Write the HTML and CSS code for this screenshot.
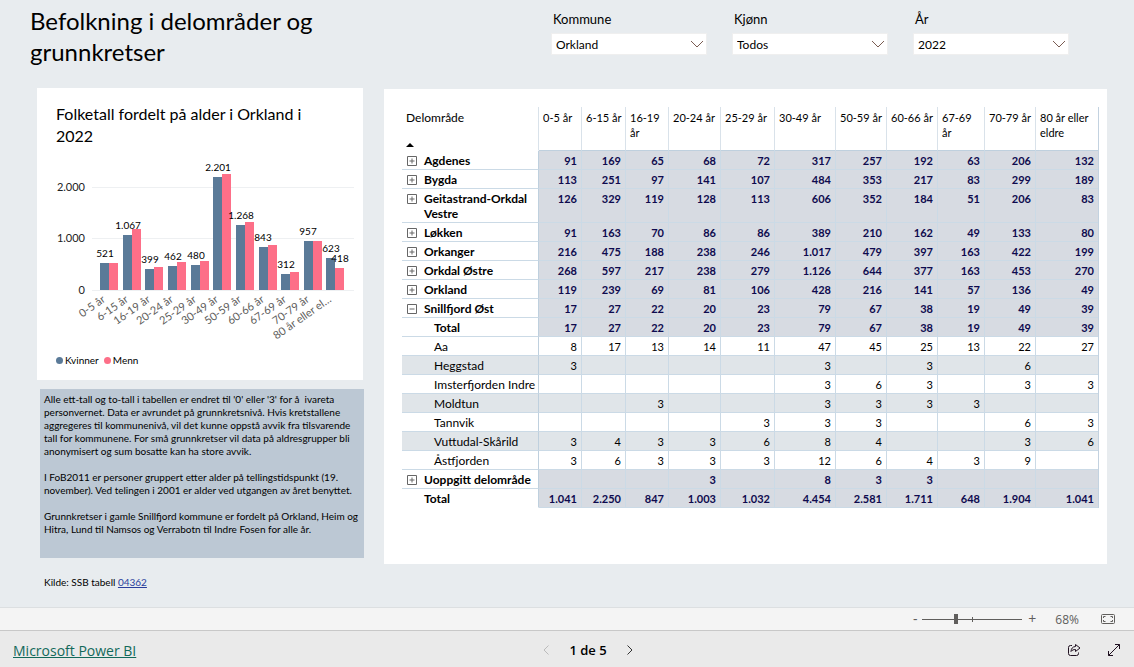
FILE: index.html
```
<!DOCTYPE html>
<html lang="nb">
<head>
<meta charset="utf-8">
<meta name="viewport" content="width=device-width, initial-scale=1">
<title>Befolkning i delområder og grunnkretser</title>
<link rel="stylesheet" href="styles.css">
</head>
<body>
<main class="report">
  <header class="report-head">
    <h1 class="title">Befolkning i delområder og grunnkretser</h1>
    <form class="slicers">
      <div class="slicer">
        <label for="kommune">Kommune</label>
        <div class="select-box">
          <select id="kommune"><option>Orkland</option></select>
          <svg class="chevron" viewBox="0 0 14 8"><path d="M1 1l6 6 6-6"/></svg>
        </div>
      </div>
      <div class="slicer">
        <label for="kjonn">Kjønn</label>
        <div class="select-box">
          <select id="kjonn"><option>Todos</option></select>
          <svg class="chevron" viewBox="0 0 14 8"><path d="M1 1l6 6 6-6"/></svg>
        </div>
      </div>
      <div class="slicer">
        <label for="ar">År</label>
        <div class="select-box">
          <select id="ar"><option>2022</option></select>
          <svg class="chevron" viewBox="0 0 14 8"><path d="M1 1l6 6 6-6"/></svg>
        </div>
      </div>
    </form>
  </header>

  <div class="panels">
    <div class="side">
      <section class="card chart-card">
        <h2 class="chart-title">Folketall fordelt på alder i Orkland i 2022</h2>
        <svg class="chart" viewBox="0 0 326 194" role="img" aria-label="Folketall fordelt på alder">
          <g class="grid">
            <path d="M55 37.5H317M55 88.500H317M55 140.500H317"/>
          </g>
          <g class="axis-y">
            <text x="48" y="41">2.000</text>
            <text x="48" y="92">1.000</text>
            <text x="48" y="144">0</text>
          </g>
          <g class="kvinner">
            <rect x="63" y="113" width="9" height="27"/>
            <rect x="86" y="85" width="9" height="55"/>
            <rect x="108" y="119" width="9" height="21"/>
            <rect x="131" y="116" width="9" height="24"/>
            <rect x="154" y="115" width="9" height="25"/>
            <rect x="176" y="27" width="9" height="113"/>
            <rect x="199" y="75" width="9" height="65"/>
            <rect x="222" y="97" width="9" height="43"/>
            <rect x="244" y="124" width="9" height="16"/>
            <rect x="267" y="91" width="9" height="49"/>
            <rect x="289" y="108" width="9" height="32"/>
          </g>
          <g class="menn">
            <rect x="72" y="113" width="9" height="27"/>
            <rect x="95" y="79" width="9" height="61"/>
            <rect x="117" y="117" width="9" height="23"/>
            <rect x="140" y="112" width="9" height="28"/>
            <rect x="163" y="111" width="9" height="29"/>
            <rect x="185" y="24" width="9" height="116"/>
            <rect x="208" y="72" width="9" height="68"/>
            <rect x="231" y="95" width="9" height="45"/>
            <rect x="253" y="122" width="9" height="18"/>
            <rect x="276" y="91" width="9" height="49"/>
            <rect x="298" y="118" width="9" height="22"/>
          </g>
          <g class="values">
            <text x="68" y="107">521</text>
            <text x="91" y="79">1.067</text>
            <text x="113" y="113">399</text>
            <text x="136" y="110">462</text>
            <text x="159" y="109">480</text>
            <text x="181" y="21">2.201</text>
            <text x="204" y="69">1.268</text>
            <text x="226" y="91">843</text>
            <text x="249" y="118">312</text>
            <text x="271" y="85">957</text>
            <text x="294" y="102">623</text>
            <text x="303" y="112">418</text>
          </g>
          <g class="axis-x">
            <text transform="translate(69 151) rotate(-35)">0-5 år</text>
            <text transform="translate(92 151) rotate(-35)">6-15 år</text>
            <text transform="translate(114 151) rotate(-35)">16-19 år</text>
            <text transform="translate(137 151) rotate(-35)">20-24 år</text>
            <text transform="translate(160 151) rotate(-35)">25-29 år</text>
            <text transform="translate(182 151) rotate(-35)">30-49 år</text>
            <text transform="translate(205 151) rotate(-35)">50-59 år</text>
            <text transform="translate(228 151) rotate(-35)">60-66 år</text>
            <text transform="translate(250 151) rotate(-35)">67-69 år</text>
            <text transform="translate(273 151) rotate(-35)">70-79 år</text>
            <text transform="translate(295 151) rotate(-35)">80 år eller el…</text>
          </g>
        </svg>
        <ul class="legend">
          <li><span class="dot dot-kvinner"></span>Kvinner</li>
          <li><span class="dot dot-menn"></span>Menn</li>
        </ul>
      </section>
      <section class="notes">
        <p>Alle ett-tall og to-tall i tabellen er endret til '0' eller '3' for å&nbsp; ivareta personvernet. Data er avrundet på grunnkretsnivå. Hvis kretstallene aggregeres til kommunenivå, vil det kunne oppstå avvik fra tilsvarende tall for kommunene. For små grunnkretser vil data på aldresgrupper bli anonymisert og sum bosatte kan ha store avvik.</p>
        <p>I FoB2011 er personer gruppert etter alder på tellingstidspunkt (19. november). Ved telingen i 2001 er alder ved utgangen av året benyttet.</p>
        <p>Grunnkretser i gamle Snillfjord kommune er fordelt på Orkland, Heim og Hitra, Lund til Namsos og Verrabotn til Indre Fosen for alle år.</p>
      </section>
      <p class="source">Kilde: SSB tabell <a href="#04362">04362</a></p>
    </div>

    <section class="card table-card">
      <table class="matrix">
        <colgroup>
          <col class="c-name"><col class="c-43"><col class="c-44"><col class="c-43"><col class="c-52"><col class="c-54"><col class="c-61"><col class="c-51"><col class="c-51"><col class="c-47"><col class="c-51"><col class="c-62">
        </colgroup>
        <thead>
          <tr><th scope="col" class="sorted"><div class="sort-head">Delområde<svg class="sort" viewBox="0 0 8 4"><path d="M0 4l4-4 4 4z"/></svg></div></th><th scope="col">0-5 år</th><th scope="col">6-15 år</th><th scope="col">16-19 år</th><th scope="col">20-24 år</th><th scope="col">25-29 år</th><th scope="col">30-49 år</th><th scope="col">50-59 år</th><th scope="col">60-66 år</th><th scope="col">67-69 år</th><th scope="col">70-79 år</th><th scope="col">80 år eller eldre</th></tr>
        </thead>
        <tbody>
          <tr class="group"><th scope="row"><div class="name"><button class="toggle" aria-label="Utvid Agdenes"><svg viewBox="0 0 10 10"><path d="M.5.5h9v9h-9zM2.500 5h5M5 2.500v5"/></svg></button>Agdenes</div></th><td>91</td><td>169</td><td>65</td><td>68</td><td>72</td><td>317</td><td>257</td><td>192</td><td>63</td><td>206</td><td>132</td></tr>
          <tr class="group"><th scope="row"><div class="name"><button class="toggle" aria-label="Utvid Bygda"><svg viewBox="0 0 10 10"><path d="M.5.5h9v9h-9zM2.500 5h5M5 2.500v5"/></svg></button>Bygda</div></th><td>113</td><td>251</td><td>97</td><td>141</td><td>107</td><td>484</td><td>353</td><td>217</td><td>83</td><td>299</td><td>189</td></tr>
          <tr class="group"><th scope="row"><div class="name"><button class="toggle" aria-label="Utvid Geitastrand-Orkdal Vestre"><svg viewBox="0 0 10 10"><path d="M.5.5h9v9h-9zM2.500 5h5M5 2.500v5"/></svg></button>Geitastrand-Orkdal<br>Vestre</div></th><td>126</td><td>329</td><td>119</td><td>128</td><td>113</td><td>606</td><td>352</td><td>184</td><td>51</td><td>206</td><td>83</td></tr>
          <tr class="group"><th scope="row"><div class="name"><button class="toggle" aria-label="Utvid Løkken"><svg viewBox="0 0 10 10"><path d="M.5.5h9v9h-9zM2.500 5h5M5 2.500v5"/></svg></button>Løkken</div></th><td>91</td><td>163</td><td>70</td><td>86</td><td>86</td><td>389</td><td>210</td><td>162</td><td>49</td><td>133</td><td>80</td></tr>
          <tr class="group"><th scope="row"><div class="name"><button class="toggle" aria-label="Utvid Orkanger"><svg viewBox="0 0 10 10"><path d="M.5.5h9v9h-9zM2.500 5h5M5 2.500v5"/></svg></button>Orkanger</div></th><td>216</td><td>475</td><td>188</td><td>238</td><td>246</td><td>1.017</td><td>479</td><td>397</td><td>163</td><td>422</td><td>199</td></tr>
          <tr class="group"><th scope="row"><div class="name"><button class="toggle" aria-label="Utvid Orkdal Østre"><svg viewBox="0 0 10 10"><path d="M.5.5h9v9h-9zM2.500 5h5M5 2.500v5"/></svg></button>Orkdal Østre</div></th><td>268</td><td>597</td><td>217</td><td>238</td><td>279</td><td>1.126</td><td>644</td><td>377</td><td>163</td><td>453</td><td>270</td></tr>
          <tr class="group"><th scope="row"><div class="name"><button class="toggle" aria-label="Utvid Orkland"><svg viewBox="0 0 10 10"><path d="M.5.5h9v9h-9zM2.500 5h5M5 2.500v5"/></svg></button>Orkland</div></th><td>119</td><td>239</td><td>69</td><td>81</td><td>106</td><td>428</td><td>216</td><td>141</td><td>57</td><td>136</td><td>49</td></tr>
          <tr class="group"><th scope="row"><div class="name"><button class="toggle" aria-label="Skjul Snillfjord Øst"><svg viewBox="0 0 10 10"><path d="M.5.5h9v9h-9zM2.500 5h5"/></svg></button>Snillfjord Øst</div></th><td>17</td><td>27</td><td>22</td><td>20</td><td>23</td><td>79</td><td>67</td><td>38</td><td>19</td><td>49</td><td>39</td></tr>
          <tr class="group child"><th scope="row">Total</th><td>17</td><td>27</td><td>22</td><td>20</td><td>23</td><td>79</td><td>67</td><td>38</td><td>19</td><td>49</td><td>39</td></tr>
          <tr class="child"><th scope="row">Aa</th><td>8</td><td>17</td><td>13</td><td>14</td><td>11</td><td>47</td><td>45</td><td>25</td><td>13</td><td>22</td><td>27</td></tr>
          <tr class="child band"><th scope="row">Heggstad</th><td>3</td><td></td><td></td><td></td><td></td><td>3</td><td></td><td>3</td><td></td><td>6</td><td></td></tr>
          <tr class="child"><th scope="row">Imsterfjorden Indre</th><td></td><td></td><td></td><td></td><td></td><td>3</td><td>6</td><td>3</td><td></td><td>3</td><td>3</td></tr>
          <tr class="child band"><th scope="row">Moldtun</th><td></td><td></td><td>3</td><td></td><td></td><td>3</td><td>3</td><td>3</td><td>3</td><td></td><td></td></tr>
          <tr class="child"><th scope="row">Tannvik</th><td></td><td></td><td></td><td></td><td>3</td><td>3</td><td>3</td><td></td><td></td><td>6</td><td>3</td></tr>
          <tr class="child band"><th scope="row">Vuttudal-Skårild</th><td>3</td><td>4</td><td>3</td><td>3</td><td>6</td><td>8</td><td>4</td><td></td><td></td><td>3</td><td>6</td></tr>
          <tr class="child"><th scope="row">Åstfjorden</th><td>3</td><td>6</td><td>3</td><td>3</td><td>3</td><td>12</td><td>6</td><td>4</td><td>3</td><td>9</td><td></td></tr>
          <tr class="group"><th scope="row"><div class="name"><button class="toggle" aria-label="Utvid Uoppgitt delområde"><svg viewBox="0 0 10 10"><path d="M.5.5h9v9h-9zM2.500 5h5M5 2.500v5"/></svg></button>Uoppgitt delområde</div></th><td></td><td></td><td></td><td>3</td><td></td><td>8</td><td>3</td><td>3</td><td></td><td></td><td></td></tr>
          <tr class="group grand"><th scope="row"><div class="name">Total</div></th><td>1.041</td><td>2.250</td><td>847</td><td>1.003</td><td>1.032</td><td>4.454</td><td>2.581</td><td>1.711</td><td>648</td><td>1.904</td><td>1.041</td></tr>
        </tbody>
      </table>
    </section>
  </div>
</main>

<div class="zoom-bar">
  <button class="zoom-btn" aria-label="Zoom ut">-</button>
  <div class="zoom-slider"><input type="range" min="0" max="100" value="33" aria-label="Zoom"></div>
  <button class="zoom-btn" aria-label="Zoom inn">+</button>
  <span class="zoom-value">68%</span>
  <button class="icon-btn" aria-label="Tilpass til siden">
    <svg class="fit" viewBox="0 0 14 10"><rect x=".5" y=".5" width="13" height="9" rx="1"/><path d="M4.500 2.500h-2v1.500M2.500 6v1.500h2M9.500 2.500h2v1.500M11.500 6v1.500h-2"/></svg>
  </button>
</div>

<footer class="foot">
  <a class="brand" href="#powerbi">Microsoft Power BI</a>
  <nav class="pager">
    <button class="icon-btn" aria-label="Forrige side" disabled><svg class="arrow" viewBox="0 0 6 10"><path d="M5.500.5L1 5l4.500 4.500"/></svg></button>
    <span>1 de 5</span>
    <button class="icon-btn" aria-label="Neste side"><svg class="arrow" viewBox="0 0 6 10"><path d="M.5.5L5 5 .5 9.500"/></svg></button>
  </nav>
  <div class="actions">
    <button class="icon-btn" aria-label="Del"><svg class="act" viewBox="0 0 14 14"><path d="M5 2.500H3.500a2 2 0 0 0-2 2v6a2 2 0 0 0 2 2h6a2 2 0 0 0 2-2V9.500"/><path d="M8.500 1.500v2C5.500 3.700 4.200 5.600 4 8.500 5.200 7 6.500 6.500 8.500 6.500v2L13 5z"/></svg></button>
    <button class="icon-btn" aria-label="Fullskjerm"><svg class="act" viewBox="0 0 14 14"><path d="M1.500 12.500l11-11M8 1.500h4.500V6M1.500 8v4.500H6"/></svg></button>
  </div>
</footer>
</body>
</html>
```
FILE: styles.css
```
* { box-sizing: border-box; }

body {
  margin: 0;
  min-height: 100vh;
  display: flex;
  flex-direction: column;
  background: #e8ecef;
  color: #000;
  font-family: Lato, "Open Sans", sans-serif;
  font-size: 12px;
}

h1, h2, p, ul { margin: 0; padding: 0; font-weight: 400; }
button { padding: 0; border: 0; background: none; font: inherit; color: inherit; }
svg { display: block; fill: none; }

.report { flex: 1; padding: 5px 27px 0 37px; }

.report-head {
  display: flex;
  justify-content: space-between;
  height: 83px;
  padding-right: 38px;
}
.title {
  width: 330px;
  margin-left: -7px;
  font-size: 24px;
  line-height: 31px;
}
.slicers { display: flex; gap: 25px; padding-top: 6px; }
.slicer { width: 156px; }
.slicer label { display: block; padding-left: 2px; font-size: 13px; line-height: 16px; }
.select-box { display: grid; align-items: center; margin-top: 6px; }
.select-box > * { grid-area: 1 / 1; }
.select-box select {
  width: 100%;
  height: 22px;
  padding: 0 4px;
  appearance: none;
  border: 1px solid #efefef;
  border-radius: 0;
  background: #fff;
  color: #000;
  font: 12px Lato, sans-serif;
}
.chevron { justify-self: end; width: 14px; height: 8px; margin-right: 3px; stroke: #7a5c52; pointer-events: none; }

.panels {
  display: grid;
  grid-template-columns: 326fr 723fr;
  gap: 21px;
}
.card { background: #fff; }

.chart-card { height: 292px; padding-top: 15px; }
.chart-title { padding: 0 36px 0 19px; font-size: 16px; line-height: 22px; }
.chart { width: 100%; margin-top: 3px; font-family: Lato, sans-serif; }
.grid { stroke: #eef0f2; }
.axis-y { fill: #222; font-size: 11px; text-anchor: end; }
.axis-x { fill: #605e5c; font-size: 11px; text-anchor: end; }
.values { fill: #000; font-size: 10px; text-anchor: middle; }
.kvinner { fill: #5a7a98; }
.menn { fill: #fd6f88; }
.legend {
  display: flex;
  gap: 5px;
  padding: 10px 0 0 19px;
  list-style: none;
  font-size: 10px;
  line-height: 12px;
}
.legend li { display: flex; align-items: center; gap: 2px; }
.dot { width: 7px; height: 7px; border-radius: 50%; }
.dot-kvinner { background: #5a7a98; }
.dot-menn { background: #fd6f88; }

.notes {
  height: 169px;
  margin: 9px -1px 0 3px;
  padding: 4px 0 0 4px;
  background: #bcc8d4;
  font-size: 10px;
  line-height: 13px;
}
.notes p + p { margin-top: 13px; }
.source { padding: 18px 0 0 7px; font-size: 10px; line-height: 13px; }
.source a { color: #2a3f9d; }

.table-card { min-width: 0; height: 475px; margin-top: 1px; padding: 18px 8px 0 18px; }
.matrix {
  width: 100%;
  table-layout: fixed;
  border-collapse: separate;
  border-spacing: 0;
  border-right: 1px solid #c3d2e0;
  font-size: 11px;
  line-height: 15px;
}
.c-name { width: 137px; }
.c-43 { width: 43px; }
.c-44 { width: 44px; }
.c-47 { width: 47px; }
.c-51 { width: 51px; }
.c-52 { width: 52px; }
.c-54 { width: 54px; }
.c-61 { width: 61px; }
.c-62 { width: 62px; }

.matrix th { text-align: left; vertical-align: top; font-weight: 400; }
.matrix thead th {
  height: 44px;
  padding: 3px 2px 0 4px;
  border-right: 1px solid #d9e2ea;
  border-bottom: 1px solid #bfd0de;
}
.matrix thead th.sorted { border-bottom-color: transparent; font-size: 12px; }
.matrix thead th:last-child { border-right: 0; }
.sort-head { display: flex; flex-direction: column; justify-content: space-between; height: 37px; }
.sort { width: 8px; height: 4px; fill: #000; }

.matrix tbody th,
.matrix tbody td {
  height: 19px;
  padding: 2px 0 1px;
  border-bottom: 1px solid #cbdae6;
}
.matrix tbody td {
  padding-right: 4px;
  border-right: 1px solid #cbdae6;
  text-align: right;
  vertical-align: top;
}
.matrix tbody td:last-child { border-right: 0; }
.matrix tbody th { border-right: 1px solid #bfd0de; font-size: 12px; }
.matrix .group th { font-weight: 700; }
.matrix .group td { background: #d7dbe2; color: #0e0a4e; font-weight: 700; }
.matrix .band > * { background: #e0e5e9; }
.matrix .child th { padding-left: 32px; white-space: nowrap; }
.matrix .grand th { border-bottom-color: transparent; }
.name { position: relative; padding-left: 22px; white-space: nowrap; }
.toggle { position: absolute; left: 5px; top: 3px; }
.toggle svg { width: 10px; height: 10px; stroke: #666; }

.zoom-bar {
  display: flex;
  align-items: center;
  justify-content: flex-end;
  height: 23px;
  padding-right: 19px;
  border-top: 1px solid #dcdfe1;
  background: #f4f4f4;
  color: #605e5c;
  font-family: "Open Sans", sans-serif;
  font-size: 12px;
}
.zoom-btn { width: 10px; font-size: 14px; line-height: 20px; }
.zoom-slider {
  position: relative;
  width: 100px;
  height: 12px;
  margin: 0 5px 0 2px;
}
.zoom-slider::after {
  content: "";
  position: absolute;
  left: 50%;
  top: 4px;
  width: 1px;
  height: 5px;
  background: #605e5c;
}
.zoom-slider input {
  display: block;
  width: 100%;
  height: 12px;
  margin: 0;
  appearance: none;
  background: linear-gradient(#605e5c, #605e5c) center / 100% 1px no-repeat;
}
.zoom-slider input::-webkit-slider-thumb {
  appearance: none;
  width: 4px;
  height: 10px;
  background: #605e5c;
}
.zoom-value { margin: 0 22px 0 18px; }
.fit { width: 14px; height: 10px; stroke: #605e5c; }

.foot {
  display: grid;
  grid-template-columns: 1fr auto 1fr;
  align-items: center;
  height: 37px;
  padding: 2px 13px 0;
  border-top: 1px solid #c8c8c8;
  background: #eaeaea;
  font-family: "Open Sans", sans-serif;
}
.brand { justify-self: start; color: #12695a; font-size: 14px; }
.pager { display: flex; align-items: center; gap: 20px; margin-left: 42px; }
.pager span { font-weight: 600; font-size: 13px; }
.arrow { width: 6px; height: 10px; stroke: #333; }
.pager .icon-btn:disabled .arrow { stroke: #bbb; }
.actions { display: flex; justify-content: flex-end; gap: 26px; }
.act { width: 14px; height: 14px; stroke: #1f1020; }
```
